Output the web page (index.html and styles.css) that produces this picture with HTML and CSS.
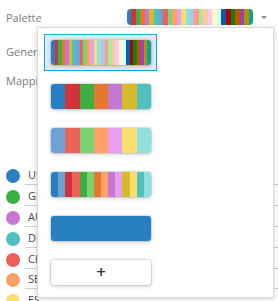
FILE: index.html
```html
<!DOCTYPE html>
<html>
<head>
<meta charset="utf-8">
<link rel="stylesheet" href="styles.css">
</head>
<body>
<div class="panel">
  <div class="row">
    <span class="label">Palette</span>
    <span class="head-swatch pal-all"></span>
    <span class="caret"></span>
  </div>
  <div class="row row-general">
    <span class="label">General</span>
  </div>
  <div class="row row-mapping">
    <span class="label">Mapping</span>
  </div>
  <ul class="legend">
    <li class="legend-item"><span class="dot c-blue"></span><span class="legend-text">US</span></li>
    <li class="legend-item"><span class="dot c-green"></span><span class="legend-text">GB</span></li>
    <li class="legend-item"><span class="dot c-purple"></span><span class="legend-text">AU</span></li>
    <li class="legend-item"><span class="dot c-teal"></span><span class="legend-text">DE</span></li>
    <li class="legend-item"><span class="dot c-lred"></span><span class="legend-text">CH</span></li>
    <li class="legend-item"><span class="dot c-lorange"></span><span class="legend-text">SE</span></li>
    <li class="legend-item"><span class="dot c-lyellow"></span><span class="legend-text">ES</span></li>
  </ul>
</div>

<div class="dropdown">
  <div class="option selected"><span class="swatch pal-all"></span></div>
  <div class="option"><span class="swatch pal-base"></span></div>
  <div class="option"><span class="swatch pal-light"></span></div>
  <div class="option"><span class="swatch pal-pairs"></span></div>
  <div class="option"><span class="swatch pal-solid"></span></div>
  <div class="option"><span class="add-btn">+</span></div>
</div>
</body>
</html>
```
FILE: styles.css
```css
html, body {
  margin: 0;
  padding: 0;
  background: #fff;
  font-family: "Open Sans", "DejaVu Sans", sans-serif;
  font-size: 11px;
  color: #777;
  width: 278px;
  height: 301px;
  overflow: hidden;
}

.panel {
  position: relative;
}

.row {
  display: flex;
  align-items: center;
  height: 34px;
  padding: 0 11px 0 6px;
}
.row-mapping { height: 24px; }

.label {
  flex: 1;
  color: #7a7a7a;
}

.head-swatch {
  width: 126px;
  height: 16px;
  border-radius: 4px;
}

.caret {
  width: 0;
  height: 0;
  margin-left: 8px;
  border-left: 3px solid transparent;
  border-right: 3px solid transparent;
  border-top: 3.5px solid #8a8a8a;
}

.legend {
  list-style: none;
  margin: 74px 0 0 0;
  padding: 0;
}
.legend-item {
  display: flex;
  align-items: center;
  height: 20.8px;
}
.dot {
  width: 14px;
  height: 14px;
  border-radius: 50%;
  margin-left: 6px;
  margin-right: 5px;
  flex: none;
}
.legend-text {
  flex: 1;
  padding: 0 0 2px 3px;
  line-height: 15px;
  border-bottom: 1px solid #cfcfcf;
  color: #4a4a5a;
}

.c-blue { background: #2980c1; }
.c-green { background: #3caf43; }
.c-purple { background: #c677d3; }
.c-teal { background: #4fbfbf; }
.c-lred { background: #ec625a; }
.c-lorange { background: #ffa068; }
.c-lyellow { background: #f8df6f; }

.dropdown {
  position: absolute;
  left: 37px;
  top: 27px;
  width: 237px;
  height: 271px;
  box-sizing: border-box;
  background: #fff;
  border: 1px solid #d9d9d9;
  box-shadow: 0 1px 6px rgba(0, 0, 0, 0.18);
  padding: 6px;
  display: flex;
  flex-direction: column;
  gap: 7px;
}

.option {
  width: 113px;
  height: 37px;
  box-sizing: border-box;
  border: 1px solid transparent;
  padding: 5px 6px;
}
.option.selected {
  border-color: #19a3e0;
  background: #dbedf7;
}

.swatch,
.add-btn {
  display: block;
  width: 100px;
  height: 25px;
  border-radius: 3px;
  box-shadow: 0 0 0 1px rgba(0, 0, 0, 0.08), 0 1px 4px rgba(0, 0, 0, 0.22);
}

.add-btn {
  background: #fff;
  text-align: center;
  line-height: 24px;
  font-size: 17px;
  font-weight: 600;
  color: #333;
}

.pal-solid { background: #2980c1; }

.pal-base {
  background: linear-gradient(to right,
    #2980c1 0 14.286%, #d0343a 14.286% 28.571%, #3caf43 28.571% 42.857%,
    #e5772f 42.857% 57.143%, #c677d3 57.143% 71.429%, #d6bc2a 71.429% 85.714%,
    #4fbfbf 85.714% 100%);
}

.pal-light {
  background: linear-gradient(to right,
    #6ca2d4 0 14.286%, #ec625a 14.286% 28.571%, #79d374 28.571% 42.857%,
    #ffa068 42.857% 57.143%, #e79fef 57.143% 71.429%, #f8df6f 71.429% 85.714%,
    #91e0e0 85.714% 100%);
}

.pal-pairs {
  background: linear-gradient(to right,
    #2980c1 0 7.143%, #6ca2d4 7.143% 14.286%,
    #d0343a 14.286% 21.429%, #ec625a 21.429% 28.571%,
    #3caf43 28.571% 35.714%, #79d374 35.714% 42.857%,
    #e5772f 42.857% 50%, #ffa068 50% 57.143%,
    #c677d3 57.143% 64.286%, #e79fef 64.286% 71.429%,
    #d6bc2a 71.429% 78.571%, #f8df6f 78.571% 85.714%,
    #4fbfbf 85.714% 92.857%, #91e0e0 92.857% 100%);
}

.pal-all {
  background: linear-gradient(to right,
    #2980c1 0 3.571%, #d0343a 3.571% 7.143%, #3caf43 7.143% 10.714%,
    #e5772f 10.714% 14.286%, #c677d3 14.286% 17.857%, #d6bc2a 17.857% 21.429%,
    #4fbfbf 21.429% 25%,
    #6ca2d4 25% 28.571%, #ec625a 28.571% 32.143%, #79d374 32.143% 35.714%,
    #ffa068 35.714% 39.286%, #e79fef 39.286% 42.857%, #f8df6f 42.857% 46.429%,
    #91e0e0 46.429% 50%,
    #aec4e8 50% 53.571%, #ff9a8a 53.571% 57.143%, #abe89c 57.143% 60.714%,
    #ffc8a0 60.714% 64.286%, #fdc6fb 64.286% 67.857%, #ffffbe 67.857% 71.429%,
    #d4fdfb 71.429% 75%,
    #0a5ea8 75% 78.571%, #ad0010 78.571% 82.143%, #008a00 82.143% 85.714%,
    #c45000 85.714% 89.286%, #9c43ae 89.286% 92.857%, #b09400 92.857% 96.429%,
    #0f9d9d 96.429% 100%);
}
```
